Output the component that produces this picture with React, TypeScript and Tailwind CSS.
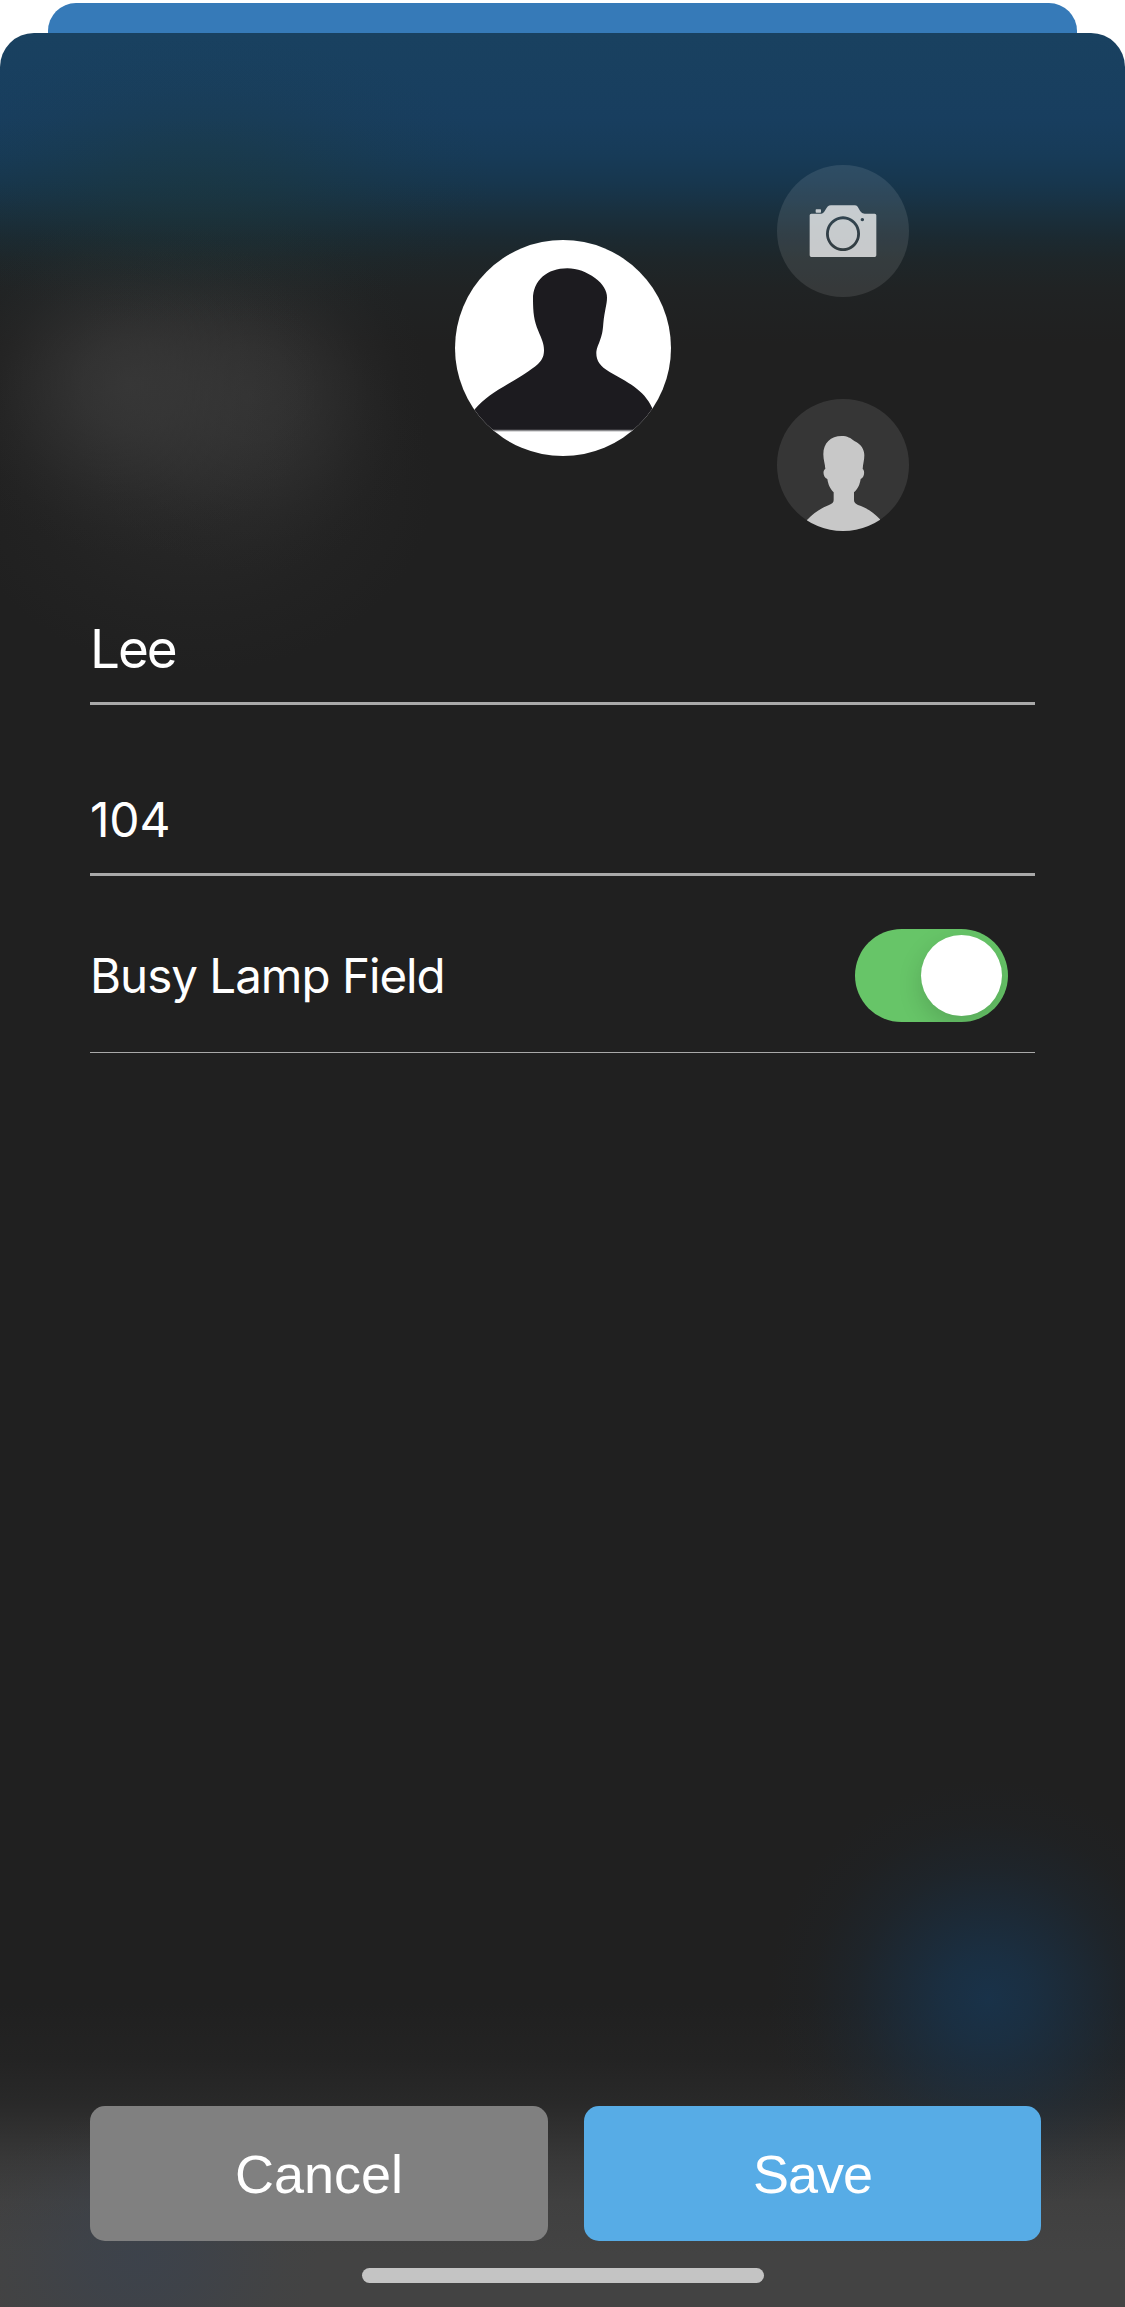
import { useState } from "react";
import type { ReactNode } from "react";

function AvatarImage() {
    return (
        <svg viewBox="45 30 648 648" className="h-full w-full">
            <rect x="100" y="596" width="560" height="8" fill="#8d8d90" />
            <path
                fill="#1c1b1f"
                d="M382 115C412 115 440 126 465 144C489 162 501 182 501 203C501 223 494 240 490 280C488 308 486 314 479 334C473 350 469 358 469 370C469 392 480 409 509 426C558 455 612 477 637 535L670 599H70L105 537C130 507 165 484 205 461C240 441 272 421 294 402C308 389 312 376 312 360C312 340 304 325 295 303C282 272 279 248 279 207C279 151 322 115 382 115Z"
            />
        </svg>
    );
}

function CameraIcon() {
    return (
        <svg viewBox="51 45 396 396" className="h-full w-full" fill="#fff" fillOpacity="0.73">
            <rect x="167" y="178" width="16" height="10" rx="2" />
            <path
                fillRule="evenodd"
                d="M154 191H184C197 191 196 166 213 166H284C299 166 296 191 314 191H344Q349 191 349 196V316Q349 321 344 321H154Q149 321 149 316V196Q149 191 154 191ZM249 199a51 52 0 1 0 .1 0ZM307 204a5 5 0 1 0 .1 0Z"
            />
            <ellipse cx="249" cy="251" rx="42.5" ry="43.5" />
        </svg>
    );
}

function PersonIcon() {
    return (
        <svg viewBox="51 42 396 396" className="h-full w-full">
            <path
                fill="#c8c8c8"
                d="M245 153C262 153 272 159 283 168C303 178 313 192 313 211C313 225 309 237 308 252C315 256 314 277 302 282C299 300 294 311 282 322V345C282 353 287 356 294 360C322 370 342 383 360 403L360 450H141V405C160 384 182 370 207 360C216 356 221 353 221 345V322C210 311 205 300 202 282C189 277 187 256 196 252C195 237 190 225 190 208C190 174 212 153 245 153Z"
            />
        </svg>
    );
}

function RoundButton({ label, children }: { label: string; children: ReactNode }) {
    return (
        <button aria-label={label} className="size-[132px] overflow-hidden rounded-full bg-white/10">
            {children}
        </button>
    );
}

export default function App() {
    const [busyLamp, setBusyLamp] = useState(true);

    return (
        <div className="flex h-[2307px] w-[1125px] flex-col bg-white pt-[3px] font-['Inter',sans-serif] text-white">
            {/* Card behind the sheet */}
            <div className="mx-12 h-[30px] shrink-0 rounded-t-[28px] bg-[#367ab8]" />

            <main className="flex flex-1 flex-col overflow-hidden rounded-t-[34px] bg-[#202020] bg-[radial-gradient(ellipse_300px_150px_at_200px_150px,#1e383866_0%,#1e383852_25%,#1e383833_45%,#1e383817_65%,#1e383806_85%,#1e383800_100%),radial-gradient(circle_220px_at_988px_1965px,#193249_0%,#193249d0_20%,#19324988_40%,#19324940_60%,#19324911_80%,#19324900_100%),radial-gradient(ellipse_190px_170px_at_130px_352px,#3a3a3ad0_0%,#3a3a3aaa_25%,#3a3a3a66_48%,#3a3a3a2c_68%,#3a3a3a0c_85%,#3a3a3a00_100%),radial-gradient(ellipse_180px_180px_at_250px_362px,#373737c0_0%,#373737a0_25%,#37373760_48%,#37373728_68%,#3737370a_85%,#37373700_100%),radial-gradient(ellipse_240px_190px_at_195px_450px,#2c2c2c99_0%,#2c2c2c77_35%,#2c2c2c30_68%,#2c2c2c00_100%),radial-gradient(ellipse_180px_150px_at_140px_2225px,#3b424dcc_0%,#3b424d99_30%,#3b424d44_60%,#3b424d11_82%,#3b424d00_100%),linear-gradient(to_bottom,#194160_0px,#183e5f_85px,#173b58_122px,#17364d_152px,#19303f_178px,#1b2a32_203px,#1e2629_228px,#202324_255px,#20202000_310px),linear-gradient(to_bottom,#202020_1970px,#232323_2025px,#292929_2070px,#313131_2100px,#393939_2130px,#404040_2168px,#434343_2220px)]">
                {/* Photo and photo sources */}
                <div className="grid h-[498px] shrink-0 grid-cols-[455px_216px_1fr]">
                    <div className="col-start-2 mt-[207px] size-[216px] overflow-hidden rounded-full bg-white">
                        <AvatarImage />
                    </div>
                    <div className="flex flex-col gap-[102px] pt-[132px] pl-[106px]">
                        <RoundButton label="Take photo">
                            <CameraIcon />
                        </RoundButton>
                        <RoundButton label="Choose picture">
                            <PersonIcon />
                        </RoundButton>
                    </div>
                </div>

                {/* Contact fields */}
                <div className="mx-[90px] flex flex-col">
                    <div className="h-[174px] border-b-[3px] border-[#a9a9a9] pt-[86px] text-[53px] leading-[64px] tracking-[-2px]">
                        Lee
                    </div>
                    <div className="h-[171px] border-b-[3px] border-[#a9a9a9] pt-[85px] text-[48px] leading-[60px] tracking-[-0.2px]">
                        104
                    </div>
                    <div className="flex h-[177px] items-start justify-between border-b border-[#a9a9a9] pr-[27px]">
                        <span className="pt-[70px] text-[47.5px] leading-[60px] tracking-[-1px]">Busy Lamp Field</span>
                        <button
                            role="switch"
                            aria-checked={busyLamp}
                            aria-label="Toggle"
                            onClick={() => setBusyLamp(!busyLamp)}
                            className={
                                "mt-[53px] flex h-[93px] w-[153px] overflow-hidden rounded-full p-1.5 " +
                                (busyLamp ? "justify-end bg-[#67c568]" : "justify-start bg-[#39393d]")
                            }
                        >
                            <span className="size-[81px] rounded-full bg-white shadow-[0_9px_24px_rgba(0,0,0,0.15)]" />
                        </button>
                    </div>
                </div>

                {/* Actions */}
                <div className="mt-auto flex justify-between pr-[84px] pl-[90px] font-['Liberation_Sans',sans-serif] text-[54px] leading-[60px]">
                    <button className="h-[135px] w-[458px] rounded-[15px] bg-[#808080]">Cancel</button>
                    <button className="h-[135px] w-[457px] rounded-[15px] bg-[#57ace6] tracking-[-1px]">Save</button>
                </div>
                <div className="mx-auto mt-[27px] mb-6 h-[15px] w-[402px] shrink-0 rounded-full bg-[#c4c4c4]" />
            </main>
        </div>
    );
}
